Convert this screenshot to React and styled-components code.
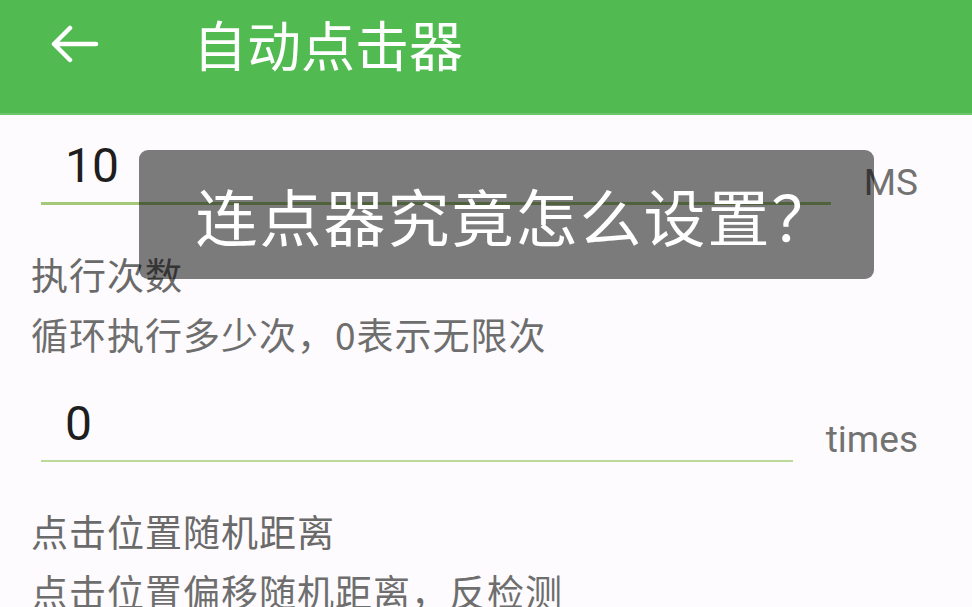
import React from 'react';
import styled, { createGlobalStyle } from 'styled-components';

const GlobalStyle = createGlobalStyle`
  html, body {
    margin: 0;
    padding: 0;
    background-color: #fdfbfd;
    overflow: hidden;
  }
  * {
    box-sizing: border-box;
  }
`;

const Screen = styled.div`
  position: relative;
  width: 972px;
  height: 607px;
  overflow: hidden;
  background-color: #fdfbfd;
  font-family: "Noto Sans CJK SC", Roboto, sans-serif;
`;

const Header = styled.header`
  display: flex;
  align-items: center;
  height: 115px;
  padding: 0 0 26px 50px;
  background-color: #51ba51;
  border-bottom: 2px solid #6cc66c;
`;

const BackButton = styled.button`
  display: flex;
  align-items: center;
  justify-content: center;
  width: 50px;
  height: 44px;
  padding: 0;
  border: none;
  background: transparent;
  cursor: pointer;
`;

const Title = styled.h1`
  margin: 0 0 0 93px;
  font-family: "Noto Sans CJK SC", sans-serif;
  font-size: 54px;
  font-weight: 400;
  line-height: 64px;
  color: #ffffff;
`;

const Content = styled.main`
  padding: 23px 54px 0 31px;
`;

const FieldRow = styled.div`
  display: flex;
  align-items: flex-end;
  margin-top: ${(p) => p.$top || 0}px;
`;

const NumberInput = styled.div`
  flex: 1;
  margin-left: 10px;
  padding: 0 0 8px 24px;
  border-bottom: ${(p) => (p.$focused ? '3px solid #a2c878' : '2px solid #bcd99c')};
  font-family: Roboto, "Liberation Sans", sans-serif;
  font-size: 48px;
  line-height: 56px;
  color: #1e1e1e;
`;

const Unit = styled.span`
  margin-left: 33px;
  font-family: Roboto, "Liberation Sans", sans-serif;
  font-size: 37px;
  line-height: 44px;
  color: #727272;
`;

const Setting = styled.section`
  margin-top: 47px;
`;

const Label = styled.div`
  font-size: 37px;
  line-height: 44px;
  letter-spacing: 1px;
  color: #6a6a6a;
  white-space: nowrap;
`;

const Description = styled.div`
  margin-top: 16px;
  font-size: 37px;
  line-height: 44px;
  letter-spacing: 1px;
  color: #6e6e6e;
  white-space: nowrap;
`;

const Caption = styled.div`
  position: absolute;
  left: 139px;
  top: 150px;
  width: 735px;
  height: 129px;
  display: flex;
  align-items: center;
  justify-content: center;
  border-radius: 9px;
  background-color: rgba(0, 0, 0, 0.51);
  font-family: "Noto Sans CJK SC", sans-serif;
  font-size: 62px;
  letter-spacing: 2px;
  color: #ffffff;
  padding-left: 18px;
`;

const BackArrow = () => (
  <svg width="48" height="40" viewBox="0 0 48 40" fill="none">
    <path
      d="M3 20 H45 M19 4 L3 20 L19 36"
      stroke="#ffffff"
      strokeWidth="4.5"
      strokeLinecap="round"
      strokeLinejoin="round"
    />
  </svg>
);

const App = () => {
  return (
    <Screen>
      <GlobalStyle />
      <Header>
        <BackButton aria-label="返回">
          <BackArrow />
        </BackButton>
        <Title>自动点击器</Title>
      </Header>
      <Content>
        <FieldRow>
          <NumberInput $focused>10</NumberInput>
          <Unit>MS</Unit>
        </FieldRow>
        <Setting>
          <Label>执行次数</Label>
          <Description>循环执行多少次，0表示无限次</Description>
        </Setting>
        <FieldRow $top={40}>
          <NumberInput>0</NumberInput>
          <Unit>times</Unit>
        </FieldRow>
        <Setting>
          <Label>点击位置随机距离</Label>
          <Description>点击位置偏移随机距离，反检测</Description>
        </Setting>
      </Content>
      <Caption>连点器究竟怎么设置？</Caption>
    </Screen>
  );
};

export default App;
